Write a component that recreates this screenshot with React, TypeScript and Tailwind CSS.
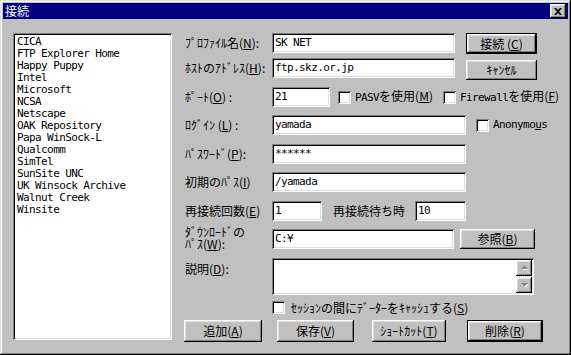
import React from "react";

const ui = "font-['Noto_Sans_CJK_JP',sans-serif] text-[12px] leading-[12px] text-black whitespace-nowrap";
const mono =
  "font-['DejaVu_Sans_Mono',monospace] text-[11px] tracking-[-0.6px] leading-[12px] text-black whitespace-pre";
const raised =
  "bg-[#c0c0c0] shadow-[inset_-1px_-1px_#000,inset_1px_1px_#fff,inset_-2px_-2px_#808080,inset_2px_2px_#dfdfdf]";
const sunken =
  "bg-white shadow-[inset_1px_1px_#808080,inset_-1px_-1px_#fff,inset_2px_2px_#000,inset_-2px_-2px_#dfdfdf]";

const SITES = [
  "CICA",
  "FTP Explorer Home",
  "Happy Puppy",
  "Intel",
  "Microsoft",
  "NCSA",
  "Netscape",
  "OAK Repository",
  "Papa WinSock-L",
  "Qualcomm",
  "SimTel",
  "SunSite UNC",
  "UK Winsock Archive",
  "Walnut Creek",
  "Winsite",
];

function K({ k }: { k: string }) {
  return (
    <>
      (<u>{k}</u>)
    </>
  );
}

function Lat({ children }: { children: React.ReactNode }) {
  return (
    <span className="font-['DejaVu_Sans_Mono',monospace] text-[11px] tracking-[-0.6px]">{children}</span>
  );
}

function Field({ className, children }: { className: string; children?: React.ReactNode }) {
  return (
    <div className={`${sunken} ${className} shrink-0 h-[20px] flex items-center pl-[3px] ${mono}`}>
      {children}
    </div>
  );
}

function Btn({
  className,
  def,
  children,
}: {
  className: string;
  def?: boolean;
  children: React.ReactNode;
}) {
  if (def) {
    return (
      <div className={`${className} shrink-0 border border-black flex`}>
        <div className={`${raised} flex-1 flex items-center justify-center ${ui}`}>{children}</div>
      </div>
    );
  }
  return (
    <div className={`${raised} ${className} shrink-0 flex items-center justify-center ${ui}`}>{children}</div>
  );
}

function Check() {
  return <div className={`${sunken} w-[13px] h-[13px] shrink-0`} />;
}

function Arrow({ down }: { down?: boolean }) {
  return (
    <div className={`${raised} w-[16px] h-[16px] flex items-center justify-center`}>
      <svg width="9" height="6" viewBox="0 0 9 6">
        {down ? (
          <>
            <polygon points="2,2 9,2 5.5,5.5" fill="#fff" />
            <polygon points="1,1 8,1 4.5,4.5" fill="#808080" />
          </>
        ) : (
          <>
            <polygon points="5.5,1.5 9,5 2,5" fill="#fff" />
            <polygon points="4.5,0.5 8,4 1,4" fill="#808080" />
          </>
        )}
      </svg>
    </div>
  );
}

export default function App() {
  return (
    <div className="w-[571px] h-[355px] p-[3px] bg-[#c0c0c0] shadow-[inset_-1px_-1px_#000,inset_1px_1px_#dfdfdf,inset_-2px_-2px_#808080,inset_2px_2px_#fff] overflow-hidden">
      {/* Title bar */}
      <div className="h-[16px] bg-[#000080] flex items-center justify-between">
        <span className={`${ui} !text-white ml-[2px]`}>接続</span>
        <div className={`${raised} w-[16px] h-[14px] mr-[2px] flex items-center justify-center`}>
          <svg width="8" height="7" viewBox="0 0 8 7">
            <path d="M0 0h2l2 2 2-2h2L5 3.5 8 7H6L4 5 2 7H0l3-3.5z" fill="#000" />
          </svg>
        </div>
      </div>

      <div className="flex pt-[14px] pl-[10px]">
        {/* Site list */}
        <div className={`${sunken} w-[159px] h-[307px] shrink-0 pt-[3px] pl-[4px]`}>
          {SITES.map((s) => (
            <div key={s} className={`${mono} h-[12px]`}>
              {s}
            </div>
          ))}
        </div>

        {/* Form */}
        <div className="ml-[13px] w-[358px] shrink-0 flex flex-col">
          <div className="flex items-center h-[20px]">
            <span className={`${ui} w-[87px] shrink-0`}>
              ﾌﾟﾛﾌｧｲﾙ名<K k="N" />:
            </span>
            <Field className="w-[183px]">SK NET</Field>
            <Btn def className="ml-[11px] w-[71px] h-[21px] self-start">
              接続 <K k="C" />
            </Btn>
          </div>

          <div className="flex items-start h-[20px] mt-[5px]">
            <span className={`${ui} w-[87px] shrink-0 self-center`}>
              ﾎｽﾄのｱﾄﾞﾚｽ<K k="H" />:
            </span>
            <Field className="w-[183px]">ftp.skz.or.jp</Field>
            <Btn className="ml-[11px] mt-[2px] w-[71px] h-[20px]">ｷｬﾝｾﾙ</Btn>
          </div>

          <div className="flex items-center h-[20px] mt-[9px]">
            <span className={`${ui} w-[87px] shrink-0`}>
              ﾎﾟｰﾄ<K k="O" /> :
            </span>
            <Field className="w-[58px]">21</Field>
            <div className="ml-[8px] w-[105px] shrink-0 flex items-center">
              <Check />
              <span className={`${ui} ml-[4px]`}>
                <Lat>PASV</Lat>を使用<K k="M" />
              </span>
            </div>
            <Check />
            <span className={`${ui} ml-[4px]`}>
              <Lat>Firewall</Lat>を使用<K k="F" />
            </span>
          </div>

          <div className="flex items-center h-[20px] mt-[8px]">
            <span className={`${ui} w-[87px] shrink-0`}>
              ﾛｸﾞｲﾝ <K k="L" /> :
            </span>
            <Field className="w-[194px]">yamada</Field>
            <div className="ml-[10px]">
              <Check />
            </div>
            <span className={`${mono} ml-[4px]`}>
              Anonymo<u>u</u>s
            </span>
          </div>

          <div className="flex items-center h-[20px] mt-[9px]">
            <span className={`${ui} w-[87px] shrink-0`}>
              ﾊﾟｽﾜｰﾄﾞ<K k="P" />:
            </span>
            <Field className="w-[194px]">******</Field>
          </div>

          <div className="flex items-center h-[20px] mt-[8px]">
            <span className={`${ui} w-[87px] shrink-0`}>
              初期のﾊﾟｽ<K k="I" />
            </span>
            <Field className="w-[194px]">/yamada</Field>
          </div>

          <div className="flex items-center h-[20px] mt-[9px]">
            <span className={`${ui} w-[87px] shrink-0`}>
              再接続回数<K k="E" />
            </span>
            <Field className="w-[50px]">1</Field>
            <span className={`${ui} ml-[11px] w-[82px] shrink-0`}>再接続待ち時</span>
            <Field className="w-[51px]">10</Field>
          </div>

          <div className="flex items-start h-[20px] mt-[8px]">
            <div className="w-[87px] shrink-0 -mt-[3px] flex flex-col">
              <div className={`${ui} h-[12px]`}>ﾀﾞｳﾝﾛｰﾄﾞの</div>
              <div className={`${ui} h-[12px]`}>
                ﾊﾟｽ<K k="W" />:
              </div>
            </div>
            <Field className="w-[182px]">C:¥</Field>
            <Btn className="ml-[6px] w-[75px] h-[20px]">
              参照<K k="B" />
            </Btn>
          </div>

          <div className="flex items-start h-[37px] mt-[9px]">
            <span className={`${ui} w-[87px] shrink-0 mt-[5px]`}>
              説明<K k="D" />:
            </span>
            <div className={`${sunken} w-[262px] h-[37px] shrink-0 p-[2px] flex justify-end`}>
              <div className="w-[16px] flex flex-col">
                <Arrow />
                <div className="h-[1px] bg-[repeating-linear-gradient(90deg,#fff_0_1px,#c0c0c0_1px_2px)]" />
                <Arrow down />
              </div>
            </div>
          </div>

          <div className="flex items-center h-[13px] mt-[6px] ml-[87px]">
            <Check />
            <span className={`${ui} ml-[6px]`}>
              ｾｯｼｮﾝの間にﾃﾞｰﾀｰをｷｬｯｼｭする<K k="S" />
            </span>
          </div>

          <div className="flex items-center h-[22px] mt-[6px] -ml-[1px]">
            <Btn className="w-[78px] h-[22px]">
              追加<K k="A" />
            </Btn>
            <Btn className="ml-[15px] w-[77px] h-[22px]">
              保存<K k="V" />
            </Btn>
            <Btn className="ml-[18px] w-[74px] h-[22px]">
              ｼｮｰﾄｶｯﾄ<K k="T" />
            </Btn>
            <Btn def className="ml-[21px] w-[76px] h-[22px]">
              削除<K k="R" />
            </Btn>
          </div>
        </div>
      </div>
    </div>
  );
}
